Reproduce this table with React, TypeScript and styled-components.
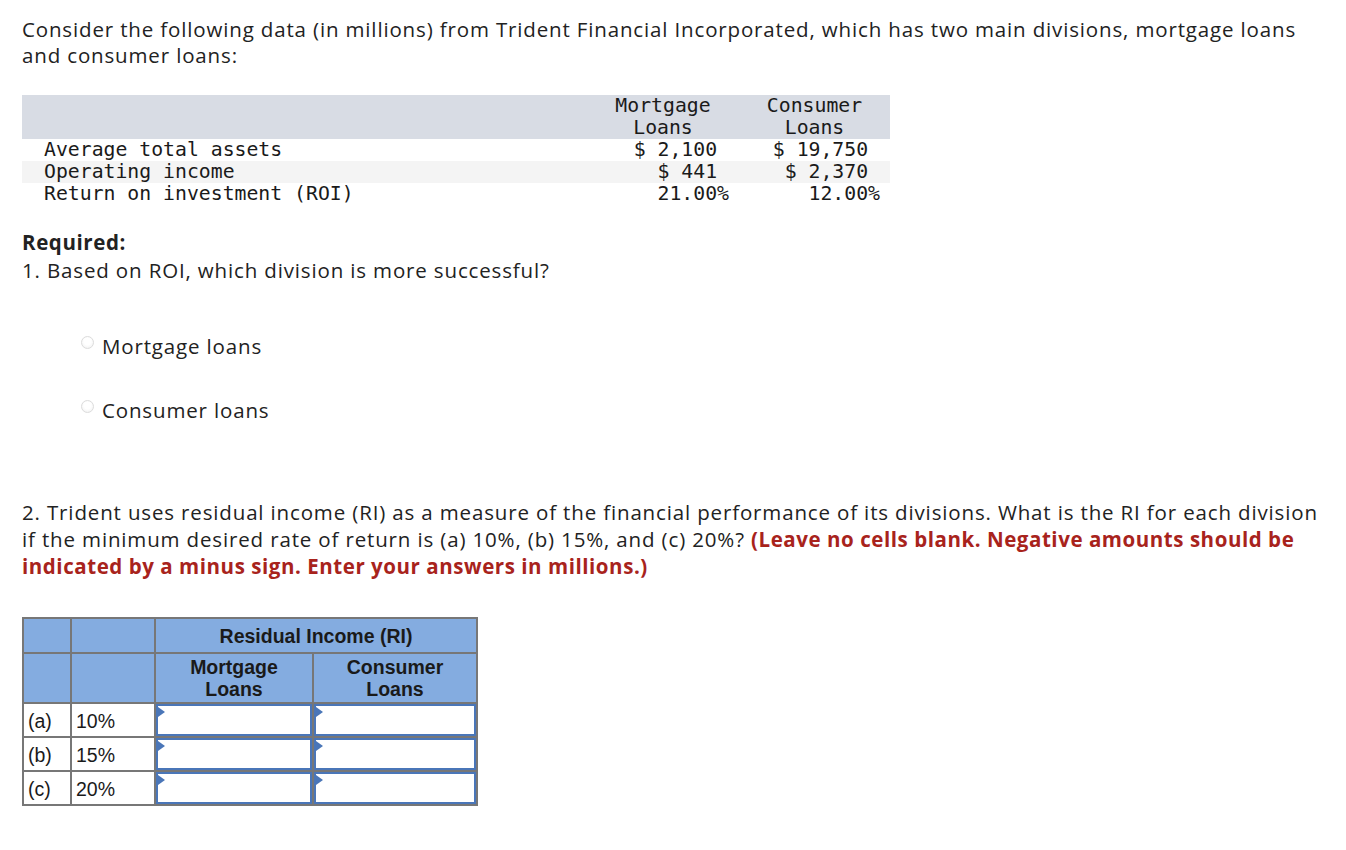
import { FC } from "react";
import styled, { createGlobalStyle } from "styled-components";

const GlobalStyle = createGlobalStyle`
  body {
    margin: 0;
    background: #ffffff;
    color: #222222;
    font-family: "Open Sans", Lato, sans-serif;
  }
`;

const Page = styled.div`
  padding: 16px 0 40px 22px;
  width: 1302px;
`;

const Para = styled.p`
  margin: 0;
  font-size: 20.5px;
  letter-spacing: 0.85px;
  line-height: 26px;
`;

const DataTable = styled.div`
  margin-top: 27px;
  width: 868px;
  display: grid;
  grid-template-columns: 565px 152px 151px;
  font-family: "DejaVu Sans Mono", "Liberation Mono", monospace;
  font-size: 19.8px;
  line-height: 22px;
  color: #1a1a1a;
`;

const DataRow = styled.div<{ $shade?: string }>`
  display: contents;
  > div {
    background: ${(p) => p.$shade ?? "transparent"};
  }
`;

const HeadCell = styled.div`
  text-align: center;
  height: 44px;
  overflow: hidden;
`;

const LabelCell = styled.div`
  padding-left: 22px;
  white-space: pre;
`;

const NumCell = styled.div`
  text-align: right;
  padding-right: 10px;
  white-space: pre;
`;

const Required = styled.h4`
  margin: 24px 0 0;
  font-size: 20.5px;
  letter-spacing: 0.6px;
  line-height: 26px;
  font-weight: 700;
`;

const Question = styled(Para)`
  margin-top: 2px;
`;

const Options = styled.div`
  margin-top: 50px;
  padding-left: 59px;
  display: flex;
  flex-direction: column;
  gap: 38px;
`;

const Option = styled.label`
  display: flex;
  align-items: center;
  gap: 8px;
  font-size: 20.5px;
  letter-spacing: 0.85px;
  line-height: 26px;
`;

const Radio = styled.span`
  width: 13px;
  height: 13px;
  border-radius: 50%;
  border: 1px solid #dcdcdc;
  background: radial-gradient(circle at 50% 40%, #ffffff 40%, #eeeeee 100%);
  box-sizing: border-box;
  margin-top: -8px;
`;

const Part2 = styled.p`
  margin: 76px 0 0;
  font-size: 20.5px;
  letter-spacing: 0.85px;
  line-height: 27px;
`;

const Warn = styled.strong`
  color: #a8231c;
  font-weight: 700;
  letter-spacing: 0.55px;
`;

const RiTable = styled.table`
  margin-top: 37px;
  border-collapse: collapse;
  border: 2px solid #777777;
  font-family: "Liberation Sans", Arial, sans-serif;
  font-size: 19.5px;
  color: #1a1a1a;
`;

const Th = styled.th<{ $w?: number; $h?: number }>`
  background: #84ace0;
  border: 2px solid #777777;
  width: ${(p) => (p.$w ? `${p.$w}px` : "auto")};
  height: ${(p) => (p.$h ? `${p.$h}px` : "auto")};
  padding: 0;
  font-weight: 700;
  line-height: 22px;
  text-align: center;
  box-sizing: border-box;
`;

const Td = styled.td`
  border: 2px solid #777777;
  height: 30px;
  padding: 2px 0 0 4px;
  line-height: 20px;
  vertical-align: middle;
`;

const InputTd = styled.td`
  border: 2px solid #777777;
  padding: 0;
  height: 32px;
`;

const AnswerBox = styled.div`
  position: relative;
  height: 32px;
  border: 2px solid #4a76b8;
  box-sizing: border-box;
  background: #ffffff;

  &::before {
    content: "";
    position: absolute;
    left: 0;
    top: 1px;
    border-left: 7px solid #4a76b8;
    border-top: 5px solid transparent;
    border-bottom: 5px solid transparent;
  }
`;

const rows = [
  { label: "Average total assets", m: "$ 2,100\u00a0", c: "$ 19,750\u00a0" },
  { label: "Operating income", m: "$ 441\u00a0", c: "$ 2,370\u00a0", shade: "#f4f4f4" },
  { label: "Return on investment (ROI)", m: "21.00%", c: "12.00%" },
];

const rates = [
  { key: "(a)", rate: "10%" },
  { key: "(b)", rate: "15%" },
  { key: "(c)", rate: "20%" },
];

const App: FC = () => {
  return (
    <>
      <GlobalStyle />
      <Page>
        <Para>
          Consider the following data (in millions) from Trident Financial Incorporated, which has two main
          divisions, mortgage loans and consumer loans:
        </Para>

        <DataTable>
          <DataRow $shade="#d8dce4">
            <HeadCell />
            <HeadCell>
              Mortgage
              <br />
              Loans
            </HeadCell>
            <HeadCell>
              Consumer
              <br />
              Loans
            </HeadCell>
          </DataRow>
          {rows.map((r) => (
            <DataRow key={r.label} $shade={r.shade}>
              <LabelCell>{r.label}</LabelCell>
              <NumCell>{r.m}</NumCell>
              <NumCell>{r.c}</NumCell>
            </DataRow>
          ))}
        </DataTable>

        <Required>Required:</Required>
        <Question>1. Based on ROI, which division is more successful?</Question>

        <Options>
          <Option>
            <Radio />
            Mortgage loans
          </Option>
          <Option>
            <Radio />
            Consumer loans
          </Option>
        </Options>

        <Part2>
          2. Trident uses residual income (RI) as a measure of the financial performance of its divisions. What is
          the RI for each division if the minimum desired rate of return is (a) 10%, (b) 15%, and (c) 20%?{" "}
          <Warn>
            (Leave no cells blank. Negative amounts should be indicated by a minus sign. Enter your answers in
            millions.)
          </Warn>
        </Part2>

        <RiTable>
          <thead>
            <tr>
              <Th $w={48} $h={35} />
              <Th $w={84} />
              <Th colSpan={2}>Residual Income (RI)</Th>
            </tr>
            <tr>
              <Th $h={50} />
              <Th />
              <Th $w={158}>
                Mortgage
                <br />
                Loans
              </Th>
              <Th $w={164}>
                Consumer
                <br />
                Loans
              </Th>
            </tr>
          </thead>
          <tbody>
            {rates.map((r) => (
              <tr key={r.key}>
                <Td>{r.key}</Td>
                <Td>{r.rate}</Td>
                <InputTd>
                  <AnswerBox />
                </InputTd>
                <InputTd>
                  <AnswerBox />
                </InputTd>
              </tr>
            ))}
          </tbody>
        </RiTable>
      </Page>
    </>
  );
};

export default App;
